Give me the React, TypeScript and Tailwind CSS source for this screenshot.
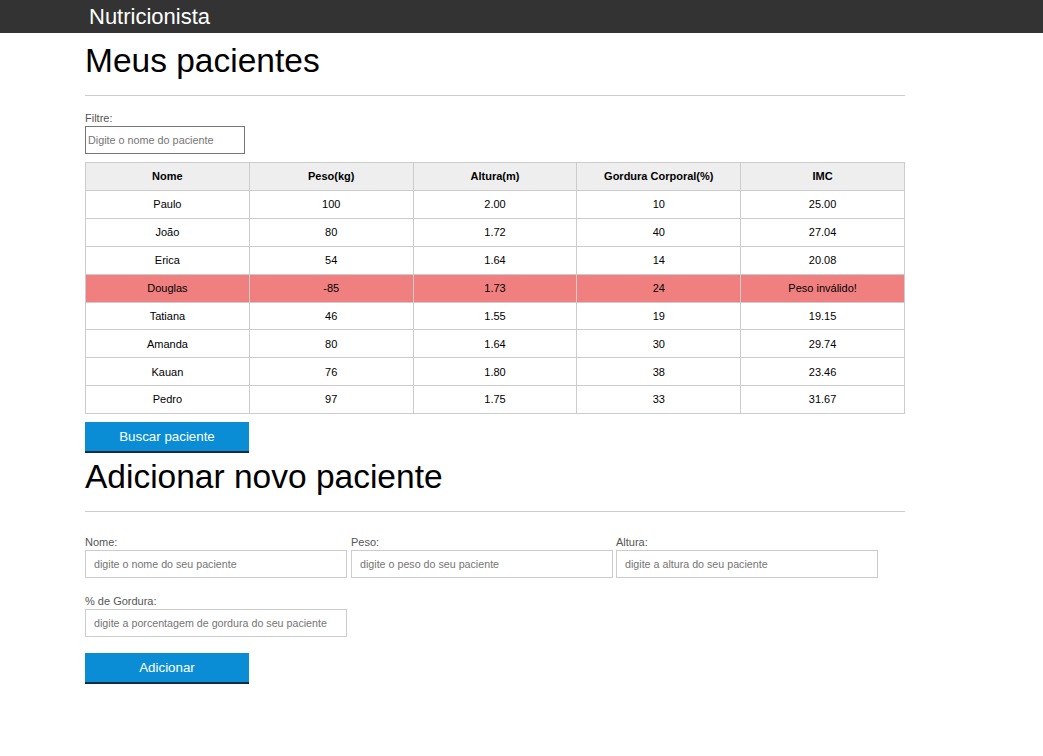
export default function App() {
  const pacientes = [
    { nome: 'Paulo', peso: '100', altura: '2.00', gordura: '10', imc: '25.00' },
    { nome: 'João', peso: '80', altura: '1.72', gordura: '40', imc: '27.04' },
    { nome: 'Erica', peso: '54', altura: '1.64', gordura: '14', imc: '20.08' },
    { nome: 'Douglas', peso: '-85', altura: '1.73', gordura: '24', imc: 'Peso inválido!', invalido: true },
    { nome: 'Tatiana', peso: '46', altura: '1.55', gordura: '19', imc: '19.15' },
    { nome: 'Amanda', peso: '80', altura: '1.64', gordura: '30', imc: '29.74' },
    { nome: 'Kauan', peso: '76', altura: '1.80', gordura: '38', imc: '23.46' },
    { nome: 'Pedro', peso: '97', altura: '1.75', gordura: '33', imc: '31.67' },
  ]

  const font = { fontFamily: '"Liberation Sans", Arial, sans-serif' }

  return (
    <div className="min-h-[756px] bg-white text-black" style={font}>
      {/* HEADER */}
      <header className="h-[33px] bg-[#333333]">
        <div className="w-[820px] ml-[85px] pl-[4px]">
          <h1 className="text-[22px] leading-[33px] text-white">Nutricionista</h1>
        </div>
      </header>

      <main className="w-[820px] ml-[85px]">
        {/* MEUS PACIENTES */}
        <section>
          <h2 className="text-[33.5px] leading-[38px] mt-[9px]">Meus pacientes</h2>
          <hr className="mt-[15px] border-t border-[#cccccc]" />

          <label className="block text-[11px] leading-[13px] text-[#555555] mt-[16px]">Filtre:</label>
          <input
            type="text"
            placeholder="Digite o nome do paciente"
            className="block w-[160px] h-[28px] mt-[1px] px-[2px] text-[10.8px] border border-[#767676] placeholder:text-[#757575] outline-none"
          />

          <table className="w-full mt-[8px] border-collapse text-[11px] table-fixed">
            <thead>
              <tr className="h-[28px] bg-[#eeeeee]">
                <th className="border border-[#cccccc] font-bold">Nome</th>
                <th className="border border-[#cccccc] font-bold">Peso(kg)</th>
                <th className="border border-[#cccccc] font-bold">Altura(m)</th>
                <th className="border border-[#cccccc] font-bold">Gordura Corporal(%)</th>
                <th className="border border-[#cccccc] font-bold">IMC</th>
              </tr>
            </thead>
            <tbody>
              {pacientes.map((p) => (
                <tr key={p.nome} className={`h-[27.9px] text-center ${p.invalido ? 'bg-[#f08080]' : 'bg-white'}`}>
                  <td className="border border-[#cccccc]">{p.nome}</td>
                  <td className="border border-[#cccccc]">{p.peso}</td>
                  <td className="border border-[#cccccc]">{p.altura}</td>
                  <td className="border border-[#cccccc]">{p.gordura}</td>
                  <td className="border border-[#cccccc]">{p.imc}</td>
                </tr>
              ))}
            </tbody>
          </table>

          <button className="block mt-[8px] w-[164px] h-[31px] bg-[#0b8dd5] border-b-[2px] border-[#0a2f45] text-white text-[13.33px]">
            Buscar paciente
          </button>
        </section>

        {/* ADICIONAR */}
        <section>
          <h2 className="text-[33.5px] leading-[38px] mt-[5px]">Adicionar novo paciente</h2>
          <hr className="mt-[15px] border-t border-[#cccccc]" />

          <form className="mt-[24px]">
            <div className="flex">
              <div className="w-[262px]">
                <label className="block text-[11px] leading-[13px] text-[#555555]">Nome:</label>
                <input
                  type="text"
                  placeholder="digite o nome do seu paciente"
                  className="block w-full h-[28px] mt-[1px] px-[8px] text-[10.7px] border border-[#cccccc] placeholder:text-[#757575] outline-none"
                />
              </div>
              <div className="w-[262px] ml-[4px]">
                <label className="block text-[11px] leading-[13px] text-[#555555]">Peso:</label>
                <input
                  type="text"
                  placeholder="digite o peso do seu paciente"
                  className="block w-full h-[28px] mt-[1px] px-[8px] text-[10.7px] border border-[#cccccc] placeholder:text-[#757575] outline-none"
                />
              </div>
              <div className="w-[262px] ml-[3px]">
                <label className="block text-[11px] leading-[13px] text-[#555555]">Altura:</label>
                <input
                  type="text"
                  placeholder="digite a altura do seu paciente"
                  className="block w-full h-[28px] mt-[1px] px-[8px] text-[10.7px] border border-[#cccccc] placeholder:text-[#757575] outline-none"
                />
              </div>
            </div>

            <div className="w-[262px] mt-[17px]">
              <label className="block text-[11px] leading-[13px] text-[#555555]">% de Gordura:</label>
              <input
                type="text"
                placeholder="digite a porcentagem de gordura do seu paciente"
                className="block w-full h-[28px] mt-[1px] px-[8px] text-[10.7px] border border-[#cccccc] placeholder:text-[#757575] outline-none"
              />
            </div>

            <button
              type="button"
              className="block mt-[16px] w-[164px] h-[31px] bg-[#0b8dd5] border-b-[2px] border-[#0a2f45] text-white text-[13.33px]"
            >
              Adicionar
            </button>
          </form>
        </section>
      </main>
    </div>
  )
}
